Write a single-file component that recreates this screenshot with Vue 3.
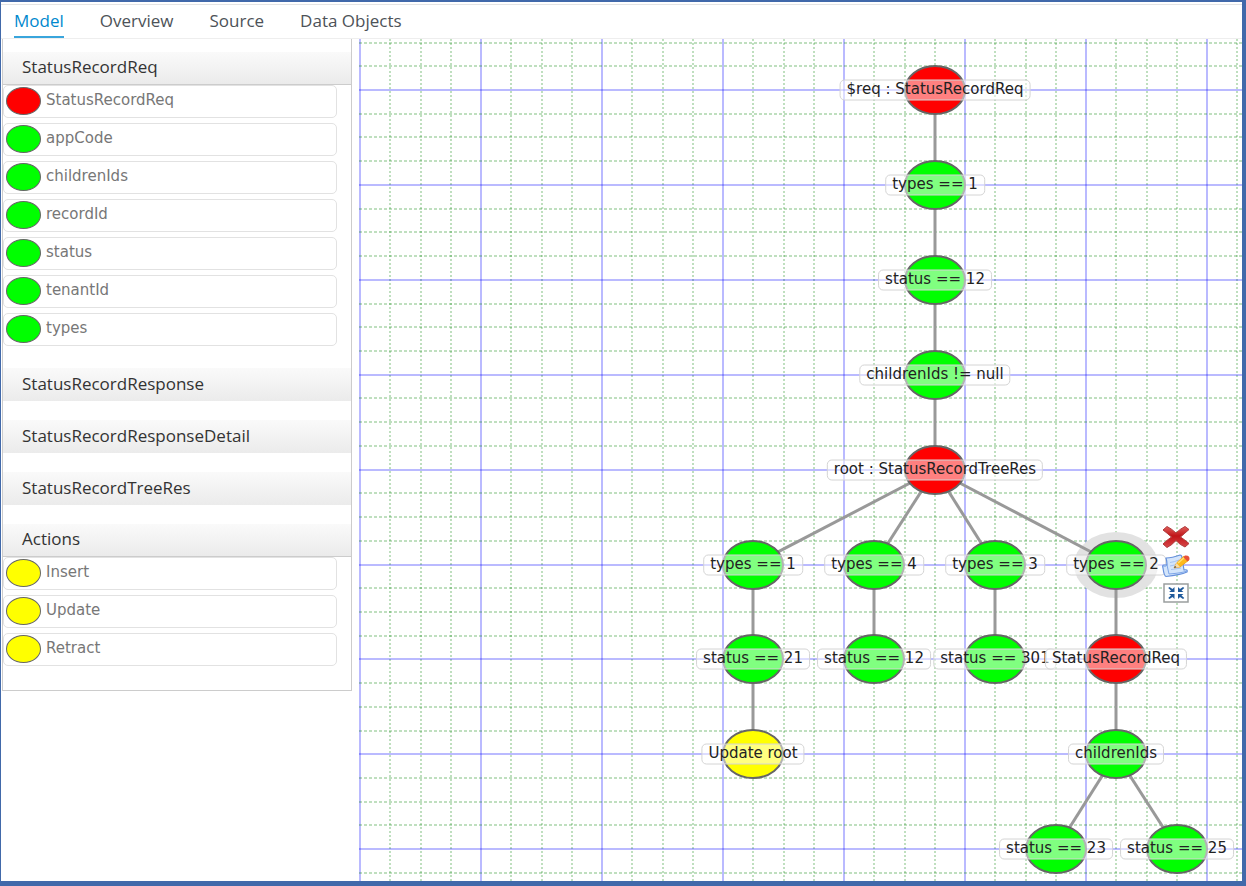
<script setup>
import { ref } from 'vue'

const tabs = ['Model', 'Overview', 'Source', 'Data Objects']
const activeTab = ref('Model')

const sections = ref([
  {
    title: 'StatusRecordReq',
    open: true,
    items: [
      { name: 'StatusRecordReq', kind: 'red' },
      { name: 'appCode', kind: 'green' },
      { name: 'childrenIds', kind: 'green' },
      { name: 'recordId', kind: 'green' },
      { name: 'status', kind: 'green' },
      { name: 'tenantId', kind: 'green' },
      { name: 'types', kind: 'green' }
    ]
  },
  { title: 'StatusRecordResponse', open: false, items: [] },
  { title: 'StatusRecordResponseDetail', open: false, items: [] },
  { title: 'StatusRecordTreeRes', open: false, items: [] },
  {
    title: 'Actions',
    open: true,
    items: [
      { name: 'Insert', kind: 'yellow' },
      { name: 'Update', kind: 'yellow' },
      { name: 'Retract', kind: 'yellow' }
    ]
  }
])

/* Grid: four minor cells per major cell; nodes sit on minor columns and major rows. */
const MAJOR_X = 121
const MAJOR_Y = 95
const ORIGIN_Y = 51
const colX = (c) => Math.round((c * MAJOR_X) / 4) + 1
const rowY = (r) => Math.round(r * (MAJOR_Y - 0.1)) + ORIGIN_Y

const verticals = Array.from({ length: 80 }, (_, i) => ({ at: colX(i), major: i % 4 === 0 }))
const horizontals = Array.from({ length: 60 }, (_, i) => ({
  at: rowY((i - 2) / 4),
  major: (i - 2) % 4 === 0
}))

const nodes = [
  { id: 'req', label: '$req : StatusRecordReq', kind: 'red', c: 19, r: 0 },
  { id: 't1', label: 'types == 1', kind: 'green', c: 19, r: 1, parent: 'req' },
  { id: 's12', label: 'status == 12', kind: 'green', c: 19, r: 2, parent: 't1' },
  { id: 'ch', label: 'childrenIds != null', kind: 'green', c: 19, r: 3, parent: 's12' },
  { id: 'root', label: 'root : StatusRecordTreeRes', kind: 'red', c: 19, r: 4, parent: 'ch' },
  { id: 'a', label: 'types == 1', kind: 'green', c: 13, r: 5, parent: 'root' },
  { id: 'b', label: 'types == 4', kind: 'green', c: 17, r: 5, parent: 'root' },
  { id: 'c', label: 'types == 3', kind: 'green', c: 21, r: 5, parent: 'root' },
  { id: 'd', label: 'types == 2', kind: 'green', c: 25, r: 5, parent: 'root', selected: true },
  { id: 'a1', label: 'status == 21', kind: 'green', c: 13, r: 6, parent: 'a' },
  { id: 'b1', label: 'status == 12', kind: 'green', c: 17, r: 6, parent: 'b' },
  { id: 'c1', label: 'status == 301', kind: 'green', c: 21, r: 6, parent: 'c' },
  { id: 'd1', label: 'StatusRecordReq', kind: 'red', c: 25, r: 6, parent: 'd' },
  { id: 'a2', label: 'Update root', kind: 'yellow', c: 13, r: 7, parent: 'a1' },
  { id: 'd2', label: 'childrenIds', kind: 'green', c: 25, r: 7, parent: 'd1' },
  { id: 'e1', label: 'status == 23', kind: 'green', c: 23, r: 8, parent: 'd2' },
  { id: 'e2', label: 'status == 25', kind: 'green', c: 27, r: 8, parent: 'd2' }
].map((n) => ({ ...n, x: colX(n.c), y: rowY(n.r) }))

const byId = Object.fromEntries(nodes.map((n) => [n.id, n]))
const edges = nodes.filter((n) => n.parent).map((n) => ({ id: n.id, from: byId[n.parent], to: n }))
const selected = nodes.find((n) => n.selected)
</script>

<template>
  <div class="app">
    <nav class="tabs" role="tablist">
      <button
        v-for="t in tabs"
        :key="t"
        type="button"
        role="tab"
        class="tab"
        :class="{ active: t === activeTab }"
        :aria-selected="t === activeTab"
        @click="activeTab = t"
      >{{ t }}</button>
    </nav>

    <div class="workspace">
      <aside class="palette">
        <section v-for="s in sections" :key="s.title" class="section" :class="{ open: s.open }">
          <button type="button" class="heading" :aria-expanded="s.open" @click="s.open = !s.open">{{ s.title }}</button>
          <ul v-if="s.open && s.items.length" class="items">
            <li v-for="i in s.items" :key="i.name" class="item">
              <span class="dot" :class="i.kind"></span>
              <span class="name">{{ i.name }}</span>
            </li>
          </ul>
        </section>
      </aside>

      <main class="canvas">
        <svg class="drawing" aria-hidden="true">
          <g class="grid">
            <line v-for="v in verticals" :key="'v' + v.at" :x1="v.at" y1="0" :x2="v.at" y2="100%" :class="v.major ? 'major' : 'minor-v'" />
            <line v-for="h in horizontals" :key="'h' + h.at" x1="0" :y1="h.at" x2="100%" :y2="h.at" :class="h.major ? 'major' : 'minor-h'" />
          </g>
          <ellipse class="halo" :cx="selected.x" :cy="selected.y" rx="42" ry="33" />
          <line v-for="e in edges" :key="e.id" class="edge" :x1="e.from.x" :y1="e.from.y" :x2="e.to.x" :y2="e.to.y" />
          <ellipse v-for="n in nodes" :key="n.id" class="node" :class="n.kind" :cx="n.x" :cy="n.y" rx="30" ry="24" />
        </svg>

        <span v-for="n in nodes" :key="n.id" class="label" :style="{ left: n.x + 'px', top: n.y + 'px' }">{{ n.label }}</span>

        <div class="tools" :style="{ left: selected.x + 60 + 'px', top: selected.y + 'px' }">
          <button type="button" class="tool" aria-label="Delete">
            <svg width="28" height="24" viewBox="0 0 28 24">
              <defs>
                <linearGradient id="cross" x1="0" y1="0" x2="0" y2="1">
                  <stop offset="0" stop-color="#e0605c" />
                  <stop offset="0.45" stop-color="#c01418" />
                  <stop offset="1" stop-color="#d8484a" />
                </linearGradient>
              </defs>
              <path d="M1 5 L5 1.5 Q10 4 14 8 Q18 4 23 1.5 L27 4.500 Q23 8 18.500 12 Q23 15 27 18.500 L23 22 Q18 20 14 15.500 Q10 20 5 22.500 L1 19 Q5 15 9.500 12 Q5 8 1 5Z" fill="url(#cross)" stroke="#b03a3c" stroke-width="1" stroke-linejoin="round" />
            </svg>
          </button>
          <button type="button" class="tool" aria-label="Edit">
            <svg width="28" height="24" viewBox="0 0 28 24">
              <path d="M4 4 Q10 4 18 1 Q20 1 20 4 L22 16 Q26 15 25 18 Q18 21 4 22.500 Q2 22 1 14 Q0 11 2 11 L5 11 Q5 7 4 4Z" fill="#d3e5fb" stroke="#6590dc" stroke-width="1.2" stroke-linejoin="round" />
              <path d="M1 12 Q4 13 5 11 L7 20 Q20 19 25 17" fill="none" stroke="#7ea6e8" stroke-width="1" />
              <path d="M8 8.500 Q12 8 17 6 M8 12 Q13 11 18 9.500 M9 15.500 Q14 15 19 14" fill="none" stroke="#a5c3f2" stroke-width="1" />
              <path d="M12 14 L14.500 9 L22 2 L27 6 L18 13Z" fill="#fdb91e" stroke="#ee9a18" stroke-width="0.8" />
              <path d="M16 9 L23 3" stroke="#ffe070" stroke-width="1.6" />
              <path d="M21.500 3.200 L23 1.500 Q28 1 27.500 5.500 L25.500 7.500Z" fill="#e8503a" />
              <path d="M12 14 L14.500 9 L18 13Z" fill="#f3dcb0" />
              <path d="M12 14 L13 12 L14.500 13.300Z" fill="#333" />
            </svg>
          </button>
          <button type="button" class="tool" aria-label="Collapse">
            <svg width="28" height="20" viewBox="0 0 28 20">
              <rect x="2" y="1" width="24" height="18" fill="#fff" stroke="#9a9e9e" stroke-width="1.5" />
              <g fill="#1f5a9c">
                <path d="M12.500 4 V9 H7 L9 7.500 L6.200 5 L7.500 4 L10.500 6Z" />
                <path d="M16 4 V9 H21.500 L19.500 7.500 L22.300 5 L21 4 L18 6Z" />
                <path d="M12.500 16 V11 H7 L9 12.500 L6.200 15 L7.500 16 L10.500 14Z" />
                <path d="M16 16 V11 H21.500 L19.500 12.500 L22.300 15 L21 16 L18 14Z" />
              </g>
            </svg>
          </button>
        </div>
      </main>
    </div>
  </div>
</template>

<style>
body {
  margin: 0;
}
</style>

<style scoped>
.app {
  box-sizing: border-box;
  display: flex;
  flex-direction: column;
  min-height: 100vh;
  border: solid #4169aa;
  border-width: 2px 4px 5px 1px;
  background: #fff;
  color: #333;
  font-family: "Open Sans", sans-serif;
}

button {
  margin: 0;
  padding: 0;
  border: 0;
  background: none;
  font: inherit;
  color: inherit;
  cursor: pointer;
}

.tabs {
  display: flex;
  gap: 36px;
  margin-top: 2px;
  padding-left: 13px;
  border-top: 1px solid #e4e4e4;
  border-bottom: 1px solid #eee;
}

.tab {
  height: 33px;
  border-bottom: 2px solid transparent;
  font-size: 17px;
  line-height: 30px;
  color: #4d5258;
}

.tab.active {
  border-bottom-color: #39a5dc;
  color: #0088ce;
}

.workspace {
  display: flex;
  flex: 1;
  align-items: stretch;
}

.palette {
  box-sizing: border-box;
  flex: none;
  align-self: flex-start;
  width: 350px;
  margin: 0 7px 0 1px;
  padding: 13px 0 5px;
  border: 1px solid #ccc;
  border-top: 0;
}

.section {
  margin-bottom: 19px;
}

.section.open:not(:last-child) {
  margin-bottom: 22px;
}

.heading {
  box-sizing: border-box;
  display: block;
  width: 100%;
  height: 33px;
  padding: 0 0 2px 19px;
  background: linear-gradient(#fafafa, #ebebeb);
  font-size: 17px;
  line-height: 28px;
  text-align: left;
}

.open .heading {
  border-bottom: 1px solid #ccc;
}

.items {
  display: flex;
  flex-direction: column;
  gap: 5px;
  margin: 0 14px 0 0;
  padding: 0;
  list-style: none;
}

.item {
  box-sizing: border-box;
  display: flex;
  align-items: flex-start;
  gap: 5px;
  height: 33px;
  padding: 1px 0 0 2px;
  border: 1px solid #e2e2e2;
  border-radius: 5px;
}

.dot {
  box-sizing: border-box;
  width: 35px;
  height: 28px;
  border: 1px solid #666;
  border-radius: 50%;
}

.dot.red {
  background: #f00;
}

.dot.green {
  background: #0f0;
}

.dot.yellow {
  background: #ff0;
}

.name {
  font-family: "DejaVu Sans", sans-serif;
  font-size: 15px;
  line-height: 26px;
  color: #777;
}

.canvas {
  position: relative;
  flex: 1;
  min-width: 0;
  overflow: hidden;
}

.drawing {
  position: absolute;
  width: 100%;
  height: 100%;
}

.major {
  stroke: #00f;
  stroke-opacity: 0.27;
  stroke-width: 2;
}

.minor-v,
.minor-h {
  stroke: #008000;
  stroke-opacity: 0.25;
  stroke-width: 2;
}

.minor-v {
  stroke-dasharray: 2 2;
}

.minor-h {
  stroke-dasharray: 3 2;
}

.halo {
  fill: #e2e2e2;
}

.edge {
  stroke: #999;
  stroke-width: 3;
}

.node {
  stroke: #666;
  stroke-width: 2;
}

.node.red {
  fill: #f00;
}

.node.green {
  fill: #0f0;
}

.node.yellow {
  fill: #ff0;
}

.label {
  position: absolute;
  box-sizing: border-box;
  height: 21px;
  padding: 0 6px;
  border: 1px solid #d4d4d4;
  border-radius: 5px;
  background: rgba(255, 255, 255, 0.5);
  font-family: "DejaVu Sans", sans-serif;
  font-size: 15px;
  line-height: 16px;
  color: #222;
  white-space: nowrap;
  transform: translate(-50%, -50%);
}

.tools {
  position: absolute;
  display: flex;
  flex-direction: column;
  align-items: center;
  gap: 5px;
  padding-bottom: 2px;
  transform: translate(-50%, -50%);
}

.tool {
  display: block;
}

.tool svg {
  display: block;
}
</style>
